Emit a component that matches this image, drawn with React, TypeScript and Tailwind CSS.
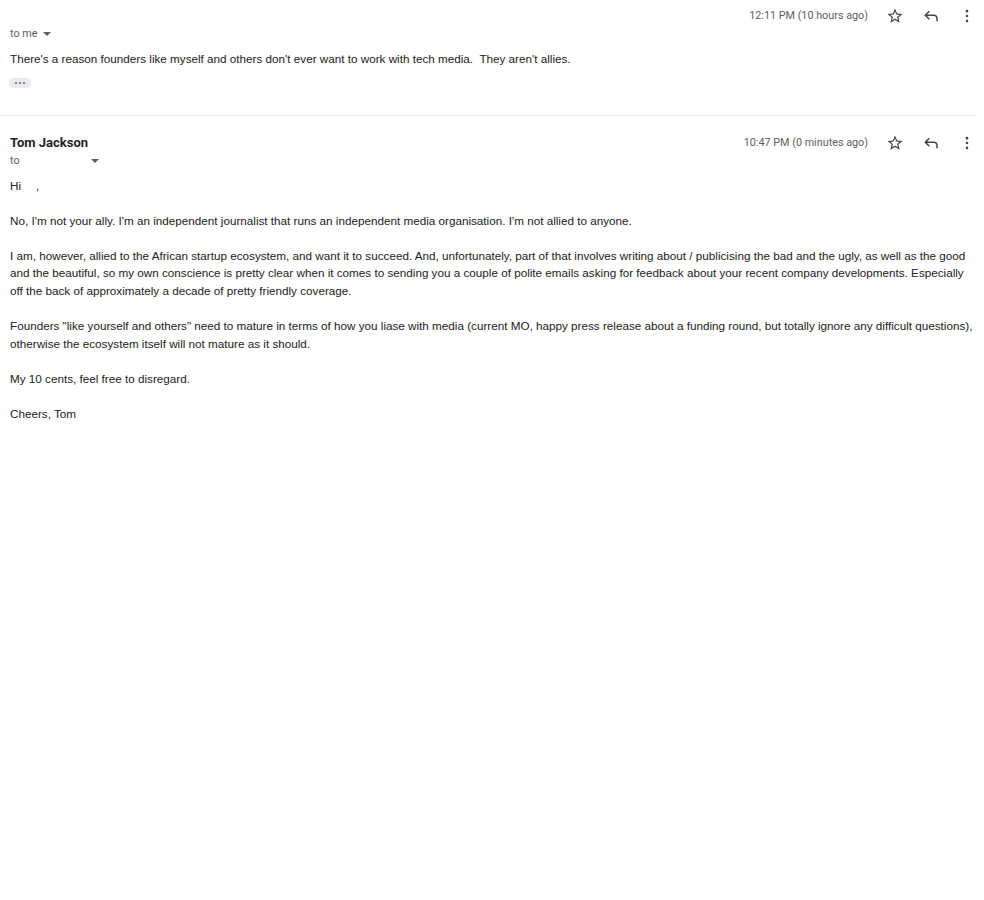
import React from 'react';

const StarIcon = () => (
  <svg width="18" height="18" viewBox="0 0 24 24" fill="#444746">
    <path d="M22 9.24l-7.19-.62L12 2 9.19 8.63 2 9.24l5.46 4.73L5.82 21 12 17.27 18.18 21l-1.63-7.03L22 9.24zM12 15.4l-3.76 2.27 1-4.28-3.32-2.88 4.38-.38L12 6.1l1.71 4.04 4.38.38-3.32 2.88 1 4.28L12 15.4z" />
  </svg>
);

const ReplyIcon = () => (
  <svg width="18" height="18" viewBox="0 0 24 24" fill="#444746">
    <path d="M19 19v-4q0-1.25-.875-2.125T16 12H6.8l3.6 3.6L9 17l-6-6 6-6 1.425 1.4-3.6 3.6H16q2.075 0 3.538 1.463T21 15v4h-2Z" />
  </svg>
);

const MoreIcon = () => (
  <svg width="18" height="18" viewBox="0 0 24 24" fill="#444746">
    <circle cx="12" cy="5.5" r="1.7" />
    <circle cx="12" cy="12" r="1.7" />
    <circle cx="12" cy="18.5" r="1.7" />
  </svg>
);

const Caret = () => (
  <span className="inline-block ml-[6px] align-middle w-0 h-0 border-l-[4px] border-r-[4px] border-t-[4px] border-l-transparent border-r-transparent border-t-[#5e5e5e]"></span>
);

const Actions = ({ time }: { time: string }) => (
  <div className="flex items-center shrink-0">
    <span className="text-[10.8px] leading-[20px] text-[#5e5e5e] mr-[17px]">{time}</span>
    <div className="flex items-center gap-[16px]">
      <button className="w-[20px] h-[20px] flex items-center justify-center"><StarIcon /></button>
      <button className="w-[20px] h-[20px] flex items-center justify-center"><ReplyIcon /></button>
      <button className="w-[20px] h-[20px] flex items-center justify-center"><MoreIcon /></button>
    </div>
  </div>
);

const bodyFont = { fontFamily: '"Liberation Sans", Arial, sans-serif' };

export default function App() {
  return (
    <div
      className="bg-white min-h-[900px] w-[984px]"
      style={{ fontFamily: 'Roboto, "Liberation Sans", Arial, sans-serif' }}
    >
      {/* earlier message, partially scrolled */}
      <div className="pt-[6px]">
        <div className="flex items-start pl-[10px] pr-[7px]">
          <div className="flex-1">
            <div className="h-[20px]"></div>
            <div className="text-[10.8px] leading-[16px] text-[#5e5e5e] flex items-center">
              to me
              <Caret />
            </div>
          </div>
          <Actions time="12:11 PM (10 hours ago)" />
        </div>
        <div className="pl-[10px] pr-[8px] mt-[8px] text-[11.7px] leading-[17.5px] text-[#222222]" style={bodyFont}>
          There's a reason founders like myself and others don't ever want to work with tech media.&nbsp; They aren't allies.
        </div>
        <div className="pl-[9px] mt-[10px]">
          <div className="w-[22px] h-[10px] rounded-full bg-[#e8eaed] flex items-center justify-center gap-[2px]">
            <span className="w-[2px] h-[2px] rounded-full bg-[#5f6368]"></span>
            <span className="w-[2px] h-[2px] rounded-full bg-[#5f6368]"></span>
            <span className="w-[2px] h-[2px] rounded-full bg-[#5f6368]"></span>
          </div>
        </div>
        <div className="h-[27px]"></div>
      </div>

      <div className="w-[976px] border-t border-[#e8e8e8]"></div>

      {/* latest message */}
      <div className="pt-[17px]">
        <div className="flex items-start pl-[10px] pr-[7px]">
          <div className="flex-1">
            <div className="text-[13px] leading-[20px] font-bold text-[#1f1f1f]">Tom Jackson</div>
            <div className="text-[10.8px] leading-[16px] text-[#5e5e5e] flex items-center">
              to
              <span className="inline-block w-[65px]"></span>
              <Caret />
            </div>
          </div>
          <Actions time="10:47 PM (0 minutes ago)" />
        </div>
        <div
          className="pl-[10px] w-[976px] mt-[8px] text-[11.7px] leading-[17.5px] text-[#222222] flex flex-col gap-[17.7px]"
          style={bodyFont}
        >
          <p>
            Hi<span className="inline-block w-[15px]"></span>,
          </p>
          <p>No, I'm not your ally. I'm an independent journalist that runs an independent media organisation. I'm not allied to anyone.</p>
          <p>
            I am, however, allied to the African startup ecosystem, and want it to succeed. And, unfortunately, part of that involves writing about / publicising the bad and the ugly, as well as the good and the beautiful, so my own conscience is pretty clear when it comes to sending you a couple of polite emails asking for feedback about your recent company developments. Especially off the back of approximately a decade of pretty friendly coverage.
          </p>
          <p>
            Founders "like yourself and others" need to mature in terms of how you liase with media (current MO, happy press release about a funding round, but totally ignore any difficult questions), otherwise the ecosystem itself will not mature as it should.
          </p>
          <p>My 10 cents, feel free to disregard.</p>
          <p>Cheers, Tom</p>
        </div>
      </div>
    </div>
  );
}
